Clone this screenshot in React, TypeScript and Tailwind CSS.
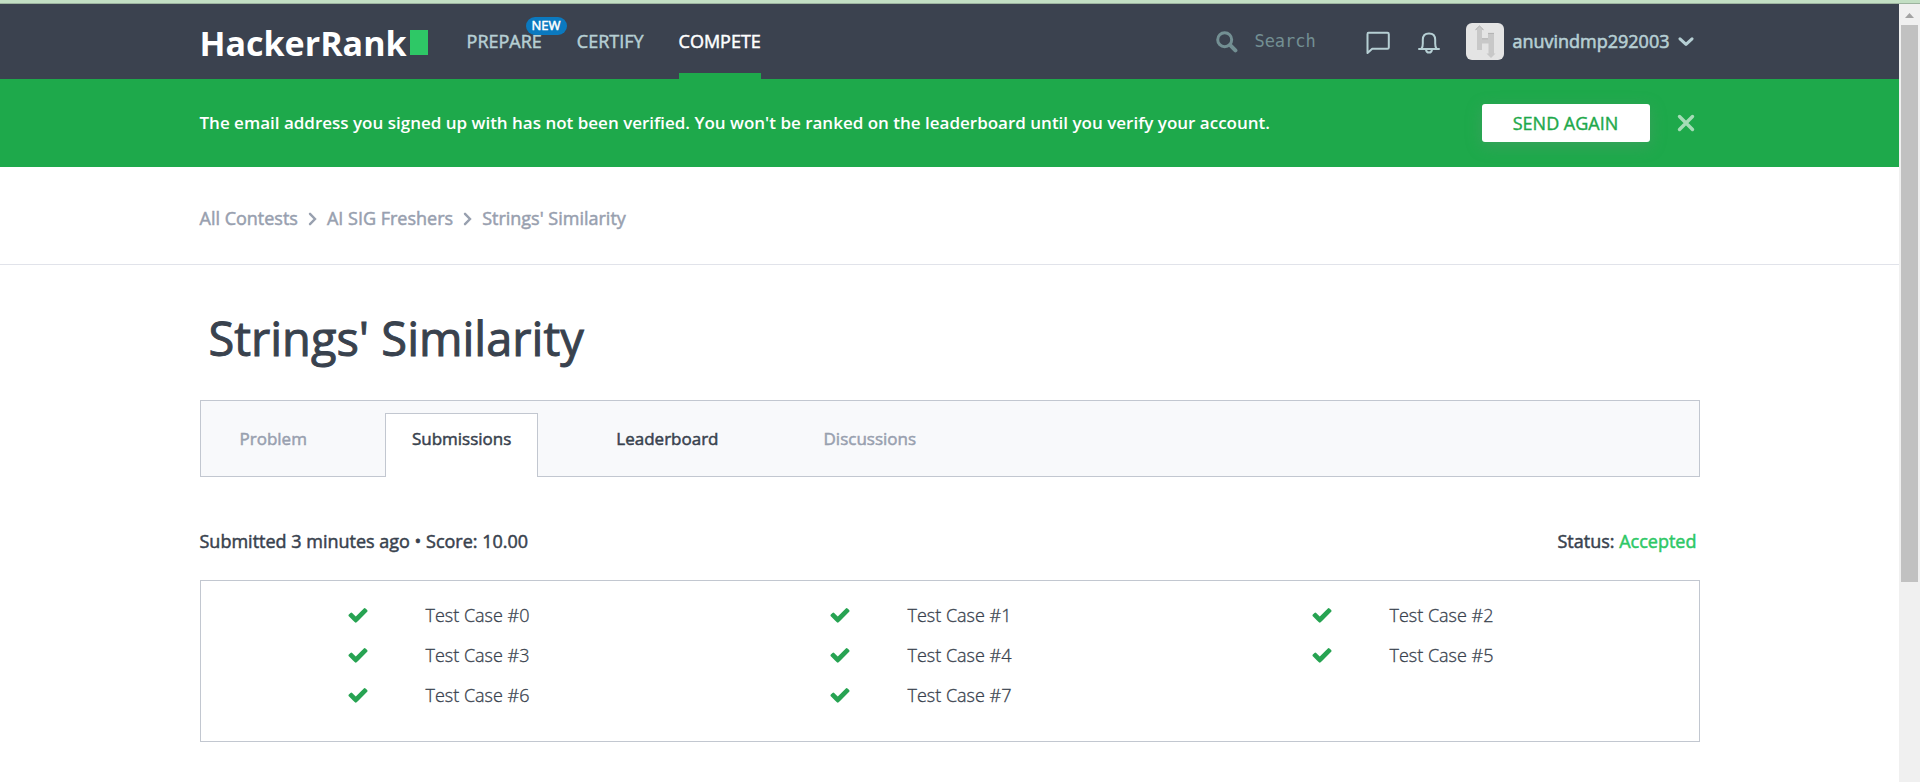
import type { ReactNode } from 'react';

const testCases = [0, 1, 2, 3, 4, 5, 6, 7];

function Container({ className = '', children }: { className?: string; children: ReactNode }) {
  return <div className={`mx-auto w-full max-w-[1500px] ${className}`}>{children}</div>;
}

function SearchIcon() {
  return (
    <svg className="size-[22px] text-[#738f93]" viewBox="0 0 22 22" fill="none" stroke="currentColor" aria-hidden="true">
      <circle cx="8.7" cy="8.7" r="7" strokeWidth="3" />
      <path d="M14.2 14.2 L19.4 19.4" strokeWidth="4" strokeLinecap="round" />
    </svg>
  );
}

function ChatIcon() {
  return (
    <svg className="h-6 w-6" viewBox="0 0 24 24" fill="none" stroke="currentColor" strokeWidth="2" strokeLinejoin="round" aria-hidden="true">
      <path d="M2.5 2.8 H21.5 Q22.8 2.8 22.8 4.2 V17.4 Q22.8 18.8 21.5 18.8 H6.2 L1.5 23 V4.2 Q1.5 2.8 2.5 2.8 Z" />
    </svg>
  );
}

function BellIcon() {
  return (
    <svg className="h-6 w-6" viewBox="0 0 24 24" fill="none" stroke="currentColor" strokeWidth="2" strokeLinecap="round" strokeLinejoin="round" aria-hidden="true">
      <path d="M2 19 H22 M4.6 18.4 Q5.8 16.8 5.8 13.4 V9.8 Q5.8 3.4 12 3.4 T18.2 9.8 V13.4 Q18.2 16.8 19.4 18.4" />
      <path d="M9 19.4 Q9.2 22.6 12 22.6 T15 19.4" />
    </svg>
  );
}

function Avatar() {
  return (
    <svg className="h-[37px] w-[38px] rounded-md bg-[#e4e4e4]" viewBox="0 0 38 37" aria-hidden="true">
      <path fill="#c8c8c8" d="M13.5 2.5 L18 7 H16 V15.5 H22 V10 H28 V30.5 H29.5 L25 35 L20.5 30.5 H22.5 V20.5 H16 V27 H11 V7 H9 Z" />
      <path stroke="#b3b3b3" fill="none" d="M9.5 6.8 L13.5 3 L17.5 6.8 M16 15.8 H22 M22 10.4 H28" />
    </svg>
  );
}

function ChevronDown() {
  return (
    <svg className="h-[10px] w-4" viewBox="0 0 16 10" fill="none" stroke="currentColor" strokeWidth="3" strokeLinecap="round" strokeLinejoin="round" aria-hidden="true">
      <path d="M2 1.8 L8 7.4 L14 1.8" />
    </svg>
  );
}

function ChevronRight() {
  return (
    <svg className="mx-[10px] h-[14px] w-[9px]" viewBox="0 0 9 14" fill="none" stroke="currentColor" strokeWidth="2.4" strokeLinecap="round" aria-hidden="true">
      <path d="M2 1.8 L7 7 L2 12.2" />
    </svg>
  );
}

function CheckIcon() {
  return (
    <svg className="size-[22px] shrink-0 text-[#27a352]" viewBox="0 0 1792 1792" fill="currentColor" aria-label="Passed" role="img">
      <path d="M1671 566q0 40-28 68l-724 724-136 136q-28 28-68 28t-68-28l-136-136-362-362q-28-28-28-68t28-68l136-136q28-28 68-28t68 28l294 295 656-657q28-28 68-28t68 28l136 136q28 28 28 68z" />
    </svg>
  );
}

function Header() {
  return (
    <header className="bg-[#3b424f] text-[#b6cfd4]">
      <Container className="flex h-[75px] items-center">
        <a href="#home" className="flex items-center gap-[3px] pt-[2px] text-[34px] leading-none font-bold text-white">
          HackerRank
          <span className="h-[25px] w-[18px] bg-[#2ec866]" />
        </a>
        <nav className="ml-[39px] flex gap-[35px] self-stretch text-[18px] [-webkit-text-stroke:0.5px]">
          <a href="#prepare" className="relative flex items-center">
            PREPARE
            <span className="absolute top-[13px] left-[59px] flex h-[18px] items-center rounded-full bg-[#0b79bf] px-[6px] text-[13px] text-white">
              NEW
            </span>
          </a>
          <a href="#certify" className="flex items-center">CERTIFY</a>
          <a href="#compete" className="flex items-center border-y-6 border-t-transparent border-b-[#1ea94b] text-white">COMPETE</a>
        </nav>
        <div className="ml-auto flex items-center">
          <label className="flex items-center gap-[16px]">
            <SearchIcon />
            <input
              type="text"
              aria-label="Search"
              placeholder="Search"
              className="w-[112px] bg-transparent font-['DejaVu_Sans_Mono',monospace] text-[17px] outline-none placeholder:text-[#738f93]"
            />
          </label>
          <button type="button" aria-label="Messages"><ChatIcon /></button>
          <button type="button" aria-label="Notifications" className="ml-[27px]"><BellIcon /></button>
          <button type="button" className="ml-[25px] flex items-center text-[18px]">
            <Avatar />
            <span className="mx-2 [-webkit-text-stroke:0.6px]">anuvindmp292003</span>
            <ChevronDown />
          </button>
          <span className="w-[6px]" />
        </div>
      </Container>
    </header>
  );
}

function Banner() {
  return (
    <section className="bg-[#1ea94b] text-white">
      <Container className="flex h-[88px] items-center">
        <p className="text-[17px] font-semibold">
          The email address you signed up with has not been verified. You won't be ranked on the leaderboard until you verify your account.
        </p>
        <button type="button" className="ml-auto h-[38px] w-[168px] rounded-[3px] bg-white text-[18px] text-[#1ea94b] shadow-[0_4px_16px_rgba(100,150,120,0.4)] [-webkit-text-stroke:0.4px]">
          SEND AGAIN
        </button>
        <button type="button" aria-label="Dismiss" className="mr-[5px] ml-[27px] text-[#a5dcb7]">
          <svg className="size-[18px]" viewBox="0 0 18 18" fill="none" stroke="currentColor" strokeWidth="3.4" strokeLinecap="round" aria-hidden="true">
            <path d="M2.5 2.5 L15.5 15.5 M15.5 2.5 L2.5 15.5" />
          </svg>
        </button>
      </Container>
    </section>
  );
}

function Breadcrumb() {
  return (
    <nav aria-label="Breadcrumb" className="border-b border-[#e1e3ea]">
      <Container className="flex h-[97px] items-center pt-[6px] text-[18px] text-[#98a0af] [-webkit-text-stroke:0.5px]">
        <a href="#contests">All Contests</a>
        <ChevronRight />
        <a href="#freshers">AI SIG Freshers</a>
        <ChevronRight />
        <a href="#challenge">Strings' Similarity</a>
      </Container>
    </nav>
  );
}

function Tabs() {
  return (
    <nav aria-label="Challenge" className="flex h-[77px] items-stretch gap-[51px] border border-[#c2c7d0] bg-[#f8f9fb] pl-[12px] text-[17px] text-[#98a0af] [-webkit-text-stroke:0.5px]">
      <a href="#problem" className="flex items-center px-[27px]">Problem</a>
      <a href="#submissions" aria-current="page" className="mt-3 -mb-px flex items-center border border-b-0 border-[#c2c7d0] bg-white px-[26px] pb-[13px] text-[#39424e]">
        Submissions
      </a>
      <a href="#leaderboard" className="flex items-center px-[27px] text-[#39424e]">Leaderboard</a>
      <a href="#discussions" className="flex items-center px-[27px]">Discussions</a>
    </nav>
  );
}

function Scrollbar() {
  return (
    <div aria-hidden="true" className="flex w-[21px] shrink-0 flex-col items-center bg-[#f0f0f0]">
      <svg className="mt-[9px] mb-[7px] h-[5px] w-[9px]" viewBox="0 0 9 5"><path fill="#a3a3a3" d="M4.5 0 L9 5 H0 Z" /></svg>
      <div className="h-[557px] w-[17px] bg-[#c1c1c1]" />
    </div>
  );
}

export default function App() {
  return (
    <div className="flex min-h-screen flex-col bg-white font-['Open_Sans',sans-serif] text-[#39424e]">
      <div className="h-1 border-b border-[#9db49f] bg-[#c3dfc4]" />
      <div className="flex flex-1">
        <div className="min-w-0 flex-1">
          <Header />
          <Banner />
          <Breadcrumb />
          <main>
            <Container className="pt-[39px] pb-10">
              <h1 className="pl-[9px] text-[47px] leading-[68px] [-webkit-text-stroke:1px]">Strings' Similarity</h1>
              <div className="mt-[28px]"><Tabs /></div>
              <div className="mt-[50px] flex justify-between pr-[3px] text-[18px] leading-[28px] [-webkit-text-stroke:0.5px]">
                <p>Submitted 3 minutes ago • Score: 10.00</p>
                <p>Status: <span className="text-[#2ec866]">Accepted</span></p>
              </div>
              <ul className="mt-[25px] grid grid-cols-3 border border-[#c2c7d0] px-[26px] pt-[14px] pb-[26px] text-[18px] font-light">
                {testCases.map((id) => (
                  <li key={id} className="flex h-[40px] items-center gap-[57px] pl-[120px] [-webkit-text-stroke:0.3px]">
                    <CheckIcon />
                    Test Case #{id}
                  </li>
                ))}
              </ul>
            </Container>
          </main>
        </div>
        <Scrollbar />
      </div>
    </div>
  );
}
